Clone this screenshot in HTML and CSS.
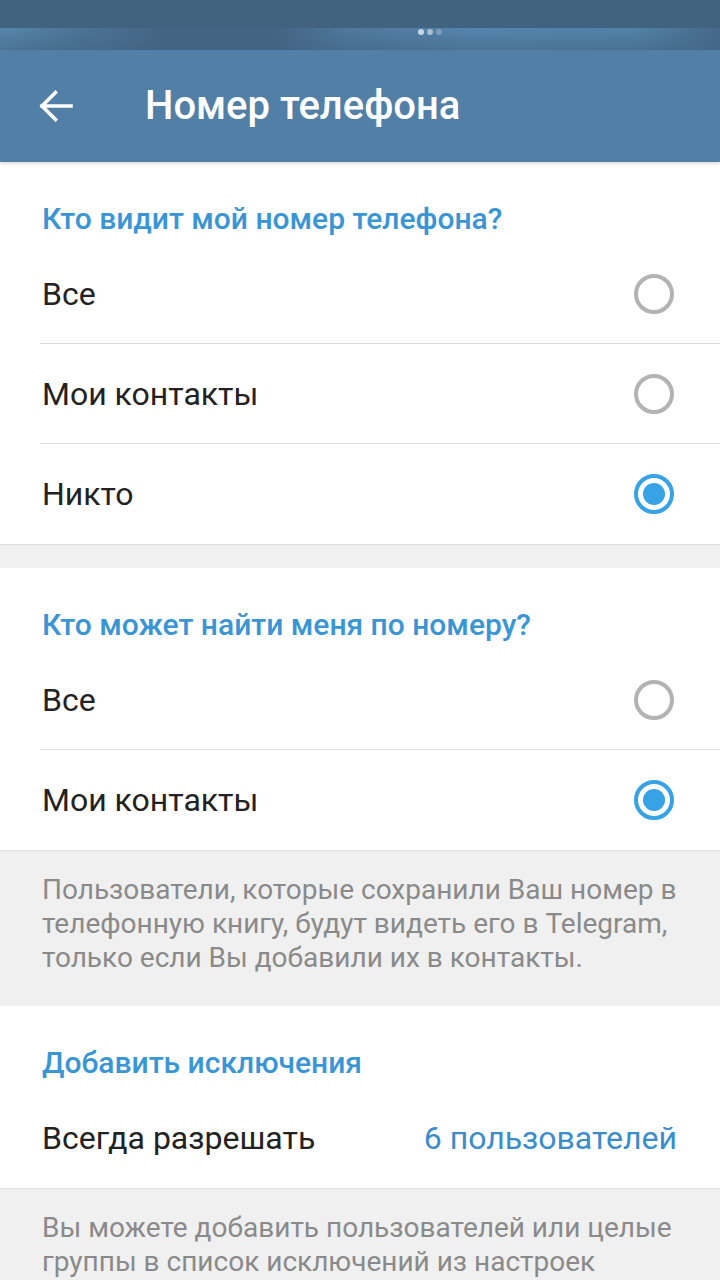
FILE: index.html
```html
<!DOCTYPE html>
<html lang="ru">
<head>
  <meta charset="UTF-8">
  <meta name="viewport" content="width=device-width, initial-scale=1.0">
  <title>Номер телефона</title>
<link rel="stylesheet" href="styles.css">
</head>
<body>
  <div class="status-bar">
    <div class="status-strip">
      <span class="status-dots"><i></i><i></i><i></i></span>
    </div>
  </div>

  <header class="toolbar">
    <svg class="back-icon" width="34" height="32" viewBox="0 0 34 32" aria-hidden="true">
      <path d="M32 16H3M16.5 2.5L3 16l13.5 13.5" fill="none" stroke="#fff" stroke-width="3.6" stroke-linecap="square" stroke-linejoin="miter"/>
    </svg>
    <h1 class="toolbar-title">Номер телефона</h1>
  </header>

  <section class="section">
    <div class="section-header">Кто видит мой номер телефона?</div>
    <div class="option">
      <span class="option-text">Все</span>
      <span class="radio"></span>
    </div>
    <div class="option">
      <span class="option-text">Мои контакты</span>
      <span class="radio"></span>
    </div>
    <div class="option">
      <span class="option-text">Никто</span>
      <span class="radio checked"></span>
    </div>
  </section>

  <div class="gap"></div>

  <section class="section">
    <div class="section-header">Кто может найти меня по номеру?</div>
    <div class="option">
      <span class="option-text">Все</span>
      <span class="radio"></span>
    </div>
    <div class="option">
      <span class="option-text">Мои контакты</span>
      <span class="radio checked"></span>
    </div>
  </section>

  <div class="note">
    Пользователи, которые сохранили Ваш номер в телефонную книгу, будут видеть его в Telegram, только если Вы добавили их в контакты.
  </div>

  <section class="section">
    <div class="section-header">Добавить исключения</div>
    <div class="option option-value">
      <span class="option-text">Всегда разрешать</span>
      <span class="option-count">6 пользователей</span>
    </div>
  </section>

  <div class="note">
    Вы можете добавить пользователей или целые группы в список исключений из настроек выше.
  </div>
</body>
</html>
```

FILE: styles.css
```css
/* General Styles */
body {
  font-family: Roboto, "Noto Sans", sans-serif;
  color: #222;
  background-color: #f0f0f0;
  margin: 0;
  padding: 0;
}

/* Status bar */
.status-bar {
  height: 50px;
  box-sizing: border-box;
  padding-top: 28px;
  background-color: #42637f;
}

.status-bar .status-strip {
  height: 22px;
  display: flex;
  align-items: flex-start;
  background:
    linear-gradient(180deg, rgba(90, 138, 178, 0.0) 0%, rgba(66, 100, 130, 0.55) 100%),
    linear-gradient(90deg, #5887ae 0%, #4d7598 10%, #436482 24%, #436482 38%, #4f789e 48%, #5686ae 66%, #5282a8 88%, #46698a 100%);
}

.status-dots {
  display: flex;
  gap: 3px;
  margin-left: 418px;
  margin-top: 1px;
}

.status-dots i {
  width: 6px;
  height: 6px;
  border-radius: 50%;
  background-color: #c9d6e3;
}

.status-dots i:nth-child(2) {
  background-color: #a9bed2;
}

.status-dots i:nth-child(3) {
  background-color: #7f9dba;
}

/* Toolbar */
.toolbar {
  position: relative;
  z-index: 1;
  height: 112px;
  display: flex;
  align-items: center;
  background-color: #527fa5;
  box-shadow: 0 2px 3px rgba(0, 0, 0, 0.13);
}

.back-icon {
  margin-left: 39px;
  flex-shrink: 0;
}

.toolbar-title {
  margin: 0 0 0 72px;
  color: #fff;
  font-size: 40px;
  font-weight: 500;
  line-height: 48px;
}

/* Sections */
.section {
  background-color: #fff;
}

.section-header {
  padding: 39px 40px 7px 42px;
  font-size: 30px;
  font-weight: 500;
  line-height: 36px;
  color: #3a95d5;
}

.option {
  height: 100px;
  box-sizing: border-box;
  margin-left: 40px;
  padding-right: 46px;
  display: flex;
  align-items: center;
  justify-content: space-between;
  border-bottom: 1px solid #dcdcdc;
}

.option:last-child {
  border-bottom: none;
}

.option-text {
  margin-left: 2px;
  font-size: 32px;
  color: #222;
}

.option-value {
  padding-right: 43px;
}

.option-count {
  font-size: 32px;
  color: #3a8ccb;
}

/* Radio buttons */
.radio {
  width: 40px;
  height: 40px;
  box-sizing: border-box;
  border: 4px solid #b3b3b3;
  border-radius: 50%;
  display: flex;
  align-items: center;
  justify-content: center;
}

.radio.checked {
  border-color: #37a2e6;
}

.radio.checked::after {
  content: "";
  width: 22px;
  height: 22px;
  border-radius: 50%;
  background-color: #37a2e6;
}

/* Gaps and notes */
.gap {
  height: 24px;
  background-color: #f0f0f0;
  box-shadow: inset 0 2px 2px -1px rgba(0, 0, 0, 0.07);
}

.note {
  padding: 23px 40px 31px 42px;
  font-size: 28px;
  line-height: 34px;
  color: #8a8a8a;
  background-color: #f0f0f0;
  box-shadow: inset 0 2px 2px -1px rgba(0, 0, 0, 0.07);
}
```
